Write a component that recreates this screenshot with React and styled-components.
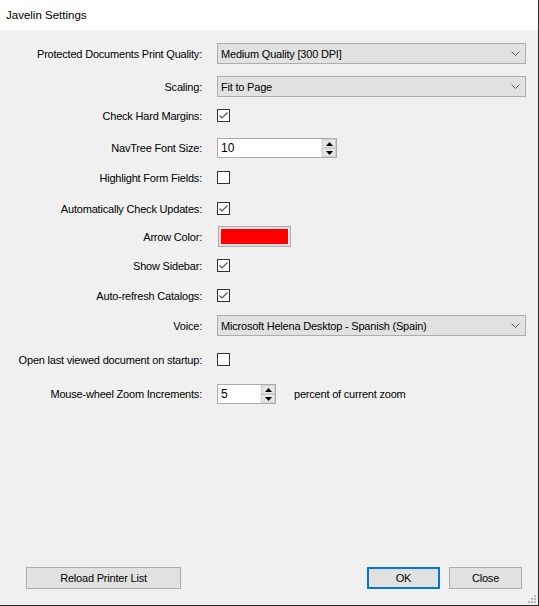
import styled, { createGlobalStyle } from "styled-components"

const GlobalStyle = createGlobalStyle`
    html, body{
        margin: 0;
        padding: 0;
        background: #f0f0f0;
    }
    *{
        box-sizing: border-box;
    }
`

const rows = [
    {label: "Protected Documents Print Quality:", kind: "select", value: "Medium Quality [300 DPI]", mt: 13},
    {label: "Scaling:", kind: "select", value: "Fit to Page", mt: 12},
    {label: "Check Hard Margins:", kind: "check", checked: true, mt: 12},
    {label: "NavTree Font Size:", kind: "spin", value: "10", width: 120, mt: 16},
    {label: "Highlight Form Fields:", kind: "check", checked: false, mt: 13},
    {label: "Automatically Check Updates:", kind: "check", checked: true, mt: 18},
    {label: "Arrow Color:", kind: "color", value: "#ff0000", mt: 11},
    {label: "Show Sidebar:", kind: "check", checked: true, mt: 12},
    {label: "Auto-refresh Catalogs:", kind: "check", checked: true, mt: 17},
    {label: "Voice:", kind: "select", value: "Microsoft Helena Desktop - Spanish (Spain)", mt: 13},
    {label: "Open last viewed document on startup:", kind: "check", checked: false, mt: 17},
    {label: "Mouse-wheel Zoom Increments:", kind: "spin", value: "5", width: 59, mt: 18, suffix: "percent of current zoom"},
]

export default function App(){
    return (
        <>
            <GlobalStyle/>
            <Window>
                <TitleBar>Javelin Settings</TitleBar>
                <Body>
                    {rows.map((r, index) => <SettingRow row={r} key={index}/>)}
                </Body>
                <Footer>
                    <Button $w={155}>Reload Printer List</Button>
                    <RightButtons>
                        <Button $w={73} $primary>OK</Button>
                        <Button $w={73}>Close</Button>
                    </RightButtons>
                </Footer>
                <Grip viewBox="0 0 10 10" width="10" height="10">
                    <rect x="7" y="1" width="2" height="2"/>
                    <rect x="4" y="4" width="2" height="2"/>
                    <rect x="7" y="4" width="2" height="2"/>
                    <rect x="1" y="7" width="2" height="2"/>
                    <rect x="4" y="7" width="2" height="2"/>
                    <rect x="7" y="7" width="2" height="2"/>
                </Grip>
            </Window>
        </>
    )
}

function SettingRow({row}){
    return (
        <Row $mt={row.mt}>
            <Label>{row.label}</Label>
            <Control>
                {row.kind === "select" && <Select value={row.value}/>}
                {row.kind === "check" && <CheckBox checked={row.checked}/>}
                {row.kind === "spin" && <Spin value={row.value} width={row.width}/>}
                {row.kind === "color" && <ColorButton><Swatch $color={row.value}/></ColorButton>}
                {row.suffix && <Suffix>{row.suffix}</Suffix>}
            </Control>
        </Row>
    )
}

function Select({value}){
    return (
        <SelectBox>
            <span>{value}</span>
            <svg width="9" height="5" viewBox="0 0 9 5">
                <polyline points="0.5,0.5 4.5,4.5 8.5,0.5" fill="none" stroke="#606060" strokeWidth="1"/>
            </svg>
        </SelectBox>
    )
}

function CheckBox({checked}){
    return (
        <Check>
            {checked && (
                <svg width="11" height="11" viewBox="0 0 11 11">
                    <polyline points="1.5,5.5 4,8 9.5,2.5" fill="none" stroke="#555555" strokeWidth="1.2"/>
                </svg>
            )}
        </Check>
    )
}

function Spin({value, width}){
    return (
        <SpinBox $w={width}>
            <span>{value}</span>
            <SpinButtons>
                <SpinButton>
                    <svg width="7" height="4" viewBox="0 0 7 4"><polygon points="3.5,0 7,4 0,4" fill="#000"/></svg>
                </SpinButton>
                <SpinButton>
                    <svg width="7" height="4" viewBox="0 0 7 4"><polygon points="0,0 7,0 3.5,4" fill="#000"/></svg>
                </SpinButton>
            </SpinButtons>
        </SpinBox>
    )
}

const Window = styled.div`
    position: relative;
    width: 539px;
    height: 606px;
    display: flex;
    flex-direction: column;
    background: #f0f0f0;
    border-right: 1px solid #2b2b2b;
    border-bottom: 1px solid #2b2b2b;
    font-family: "Liberation Sans", Arial, sans-serif;
    font-size: 11px;
    color: #000;
`
const TitleBar = styled.div`
    height: 30px;
    background: #ffffff;
    padding: 0 6px;
    display: flex;
    align-items: center;
    font-size: 11.5px;
    padding-bottom: 1px;
`
const Body = styled.div`
    flex: 1;
    display: flex;
    flex-direction: column;
`
const Row = styled.div`
    display: grid;
    grid-template-columns: 202px auto;
    column-gap: 15px;
    align-items: center;
    margin-top: ${props => props.$mt}px;
`
const Label = styled.div`
    text-align: right;
    white-space: nowrap;
    letter-spacing: -0.2px;
`
const Control = styled.div`
    display: flex;
    align-items: center;
`
const SelectBox = styled.div`
    width: 309px;
    height: 21px;
    background: #e1e1e1;
    border: 1px solid #adadad;
    display: flex;
    align-items: center;
    justify-content: space-between;
    padding: 0 4px 0 3px;
    letter-spacing: -0.2px;
    svg{
        margin-right: 1px;
    }
`
const Check = styled.div`
    width: 13px;
    height: 13px;
    background: #ffffff;
    border: 1px solid #333333;
    display: flex;
    align-items: center;
    justify-content: center;
`
const SpinBox = styled.div`
    width: ${props => props.$w}px;
    height: 20px;
    background: #ffffff;
    border: 1px solid #adadad;
    display: flex;
    align-items: center;
    justify-content: space-between;
    padding-left: 3px;
    span{
        font-size: 12px;
    }
`
const SpinButtons = styled.div`
    width: 15px;
    height: 18px;
    display: flex;
    flex-direction: column;
    border-left: 1px solid #f0f0f0;
`
const SpinButton = styled.div`
    flex: 1;
    background: #e6e6e6;
    border: 1px solid #cfcfcf;
    display: flex;
    align-items: center;
    justify-content: center;
`
const ColorButton = styled.div`
    margin-left: 1px;
    width: 73px;
    height: 21px;
    border: 1px solid #adadad;
    background: #e1e1e1;
    padding: 2px;
`
const Swatch = styled.div`
    width: 100%;
    height: 100%;
    background: ${props => props.$color};
`
const Suffix = styled.span`
    margin-left: 18px;
    letter-spacing: -0.2px;
`
const Footer = styled.div`
    display: flex;
    justify-content: space-between;
    align-items: center;
    padding: 0 16px 16px 26px;
`
const RightButtons = styled.div`
    display: flex;
    gap: 9px;
`
const Button = styled.div`
    width: ${props => props.$w}px;
    height: 22px;
    background: #e1e1e1;
    border: ${props => props.$primary ? "2px solid #0078d7" : "1px solid #adadad"};
    display: flex;
    align-items: center;
    justify-content: center;
    letter-spacing: -0.2px;
`
const Grip = styled.svg`
    position: absolute;
    right: 1px;
    bottom: 1px;
    fill: #b8b8b8;
`
